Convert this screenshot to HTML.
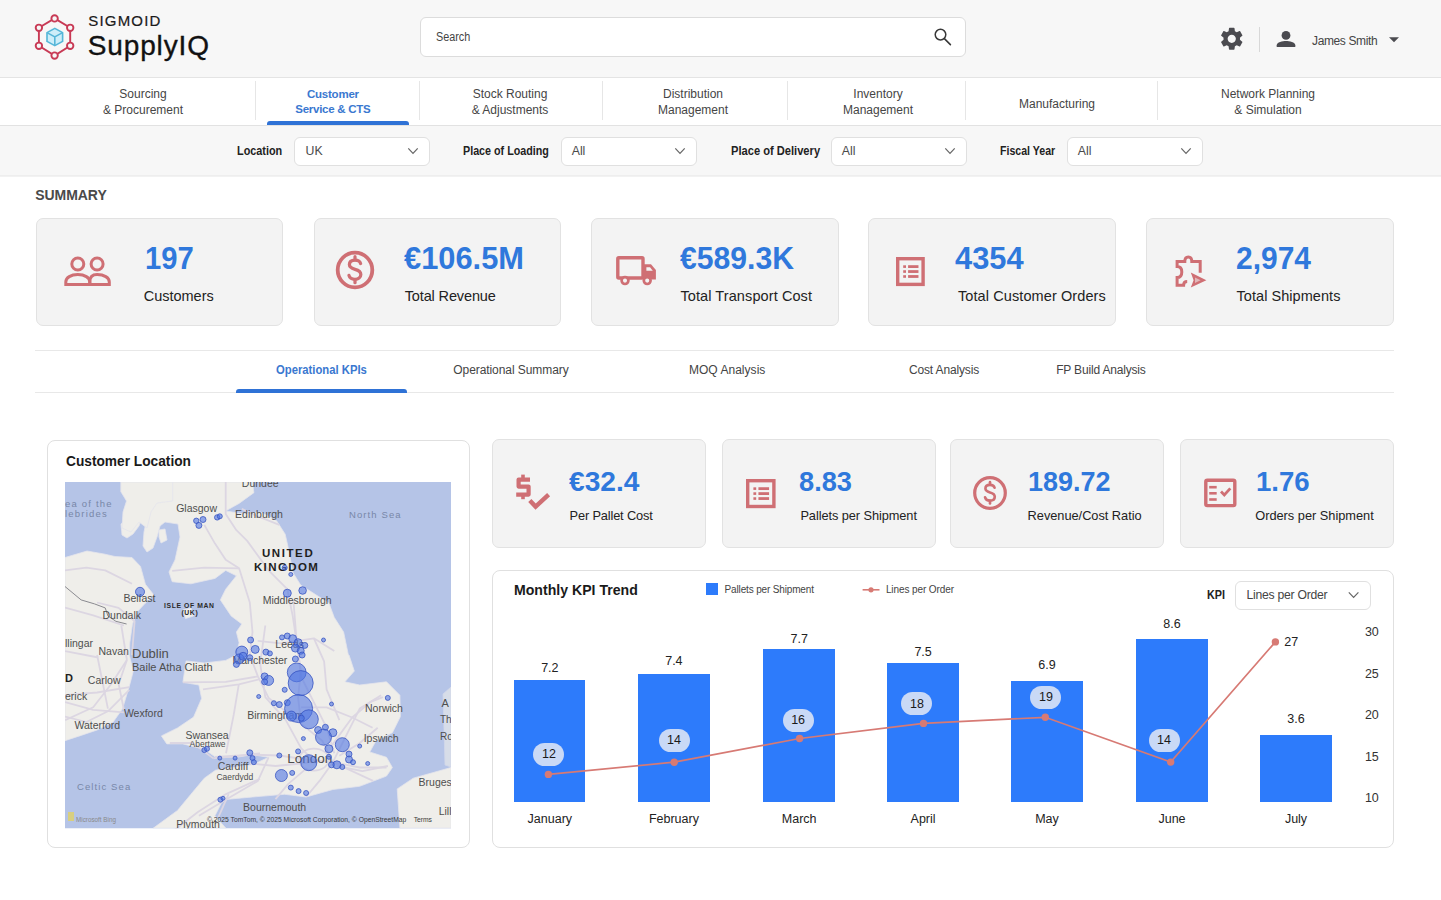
<!DOCTYPE html>
<html><head><meta charset="utf-8"><style>
html,body{margin:0;padding:0;width:1441px;height:900px;overflow:hidden;background:#fff;font-family:"Liberation Sans",sans-serif;}
.t{position:absolute;white-space:nowrap;}
svg{position:absolute;overflow:visible;}
</style></head><body>
<div style="position:absolute;left:0px;top:0px;width:1441px;height:77px;background:#f7f7f7;"></div>
<div style="position:absolute;left:0px;top:77px;width:1441px;height:1px;background:#e4e4e4;"></div>
<div style="position:absolute;left:0px;top:78px;width:1441px;height:47px;background:#ffffff;"></div>
<div style="position:absolute;left:0px;top:125px;width:1441px;height:1px;background:#e2e2e2;"></div>
<div style="position:absolute;left:0px;top:126px;width:1441px;height:49px;background:#f7f7f7;"></div>
<div style="position:absolute;left:0px;top:175px;width:1441px;height:1px;background:#eeeeee;"></div>
<div style="position:absolute;left:0px;top:176px;width:1441px;height:1px;background:#f2f2f2;"></div>
<svg style="left:0;top:0" width="100" height="77" viewBox="0 0 100 77">
<polygon points="54.6,18.4 70.2,27.8 70.2,45.8 54.6,55.6 38.9,45.8 38.9,27.8" fill="none" stroke="#c83a55" stroke-width="1.9"/>
<circle cx="54.6" cy="18.4" r="3.2" fill="#f7f7f7" stroke="#c83a55" stroke-width="1.9"/><circle cx="70.2" cy="27.8" r="3.2" fill="#f7f7f7" stroke="#c83a55" stroke-width="1.9"/><circle cx="70.2" cy="45.8" r="3.2" fill="#f7f7f7" stroke="#c83a55" stroke-width="1.9"/><circle cx="54.6" cy="55.6" r="3.2" fill="#f7f7f7" stroke="#c83a55" stroke-width="1.9"/><circle cx="38.9" cy="45.8" r="3.2" fill="#f7f7f7" stroke="#c83a55" stroke-width="1.9"/><circle cx="38.9" cy="27.8" r="3.2" fill="#f7f7f7" stroke="#c83a55" stroke-width="1.9"/>
<circle cx="54.8" cy="37" r="9" fill="#e3f5fb" opacity="0.7"/>
<g fill="#cdeef9" stroke="#55b6d8" stroke-width="1.6" stroke-linejoin="round">
<path d="M54.8 28.4 L62.6 32.6 L62.6 41.4 L54.8 45.6 L47 41.4 L47 32.6 Z"/>
<path d="M47 32.6 L54.8 36.9 L62.6 32.6 M54.8 36.9 L54.8 45.6" fill="none"/>
</g></svg>
<div class="t" style="top:13.20px;font-size:15px;line-height:15px;color:#1a1a1a;font-weight:normal;letter-spacing:1.185px;left:88.30px;-webkit-text-stroke:0.2px #1a1a1a;">SIGMOID</div>
<div class="t" style="top:31.80px;font-size:28px;line-height:28px;color:#111;font-weight:normal;letter-spacing:0.853px;left:87.80px;-webkit-text-stroke:0.35px #111;">SupplyIQ</div>
<div style="position:absolute;left:420px;top:17px;width:546px;height:40px;box-sizing:border-box;background:#fff;border:1px solid #dcdcdc;border-radius:6px;"></div>
<div class="t" style="top:31.44px;font-size:12px;line-height:12px;color:#444;font-weight:normal;left:435.70px;transform:scaleX(0.9021);transform-origin:0 0;">Search</div>
<svg style="left:930px;top:24px" width="26" height="26" viewBox="930 24 26 26">
<circle cx="940.5" cy="34.6" r="5.3" fill="none" stroke="#383838" stroke-width="1.5"/>
<line x1="944.4" y1="38.6" x2="950.4" y2="44.6" stroke="#383838" stroke-width="1.6" stroke-linecap="round"/>
</svg>
<svg style="left:1217.5px;top:25px" width="27.5" height="27.5" viewBox="0 0 24 24">
<path fill="#4b4b50" d="M19.14 12.94c.04-.3.06-.61.06-.94 0-.32-.02-.64-.07-.94l2.03-1.58c.18-.14.23-.41.12-.61l-1.92-3.32c-.12-.22-.37-.29-.59-.22l-2.39.96c-.5-.38-1.03-.7-1.62-.94l-.36-2.54c-.04-.24-.24-.41-.48-.41h-3.84c-.24 0-.43.17-.47.41l-.36 2.54c-.59.24-1.13.57-1.62.94l-2.39-.96c-.22-.08-.47 0-.59.22L2.74 8.87c-.12.21-.08.47.12.61l2.03 1.58c-.05.3-.09.63-.09.94s.02.64.07.94l-2.03 1.58c-.18.14-.23.41-.12.61l1.92 3.32c.12.22.37.29.59.22l2.39-.96c.5.38 1.03.7 1.62.94l.36 2.54c.05.24.24.41.48.41h3.84c.24 0 .44-.17.47-.41l.36-2.54c.59-.24 1.13-.56 1.62-.94l2.39.96c.22.08.47 0 .59-.22l1.92-3.32c.12-.22.07-.47-.12-.61l-2.01-1.58zM12 15.6c-1.98 0-3.6-1.62-3.6-3.6s1.62-3.6 3.6-3.6 3.6 1.62 3.6 3.6-1.62 3.6-3.6 3.6z"/>
</svg>
<div style="position:absolute;left:1259px;top:27px;width:1px;height:25px;background:#d8d8d8;"></div>
<svg style="left:1274px;top:26px" width="24" height="24" viewBox="0 0 24 24">
<circle cx="12" cy="9.4" r="4.4" fill="#4b4b50"/>
<path fill="#4b4b50" d="M2.7 21 L2.7 19.2 C2.7 16.2 8.6 14.9 12 14.9 C15.4 14.9 21.3 16.2 21.3 19.2 L21.3 21 Z"/>
</svg>
<div class="t" style="top:34.74px;font-size:12px;line-height:12px;color:#444;font-weight:normal;letter-spacing:-0.369px;left:1312.00px;">James Smith</div>
<svg style="left:1388px;top:36px" width="12" height="8" viewBox="1388 36 12 8">
<path d="M1389 37.2 L1399 37.2 L1394 42.2 Z" fill="#4b4b50"/></svg>
<div class="t" style="top:88.14px;font-size:12px;line-height:12px;color:#454545;font-weight:normal;left:-157.00px;width:600px;text-align:center;">Sourcing</div>
<div class="t" style="top:104.04px;font-size:12px;line-height:12px;color:#454545;font-weight:normal;left:-157.00px;width:600px;text-align:center;">& Procurement</div>
<div class="t" style="top:88.57px;font-size:11.5px;line-height:11.5px;color:#3a78d0;font-weight:bold;letter-spacing:-0.210px;left:32.90px;width:600px;text-align:center;">Customer</div>
<div class="t" style="top:104.47px;font-size:11.5px;line-height:11.5px;color:#3a78d0;font-weight:bold;letter-spacing:-0.278px;left:32.86px;width:600px;text-align:center;">Service &amp; CTS</div>
<div class="t" style="top:88.14px;font-size:12px;line-height:12px;color:#454545;font-weight:normal;left:210.00px;width:600px;text-align:center;">Stock Routing</div>
<div class="t" style="top:104.04px;font-size:12px;line-height:12px;color:#454545;font-weight:normal;left:210.00px;width:600px;text-align:center;">&amp; Adjustments</div>
<div class="t" style="top:88.14px;font-size:12px;line-height:12px;color:#454545;font-weight:normal;left:393.00px;width:600px;text-align:center;">Distribution</div>
<div class="t" style="top:104.04px;font-size:12px;line-height:12px;color:#454545;font-weight:normal;left:393.00px;width:600px;text-align:center;">Management</div>
<div class="t" style="top:88.14px;font-size:12px;line-height:12px;color:#454545;font-weight:normal;left:578.00px;width:600px;text-align:center;">Inventory</div>
<div class="t" style="top:104.04px;font-size:12px;line-height:12px;color:#454545;font-weight:normal;left:578.00px;width:600px;text-align:center;">Management</div>
<div class="t" style="top:88.14px;font-size:12px;line-height:12px;color:#454545;font-weight:normal;left:968.00px;width:600px;text-align:center;">Network Planning</div>
<div class="t" style="top:104.04px;font-size:12px;line-height:12px;color:#454545;font-weight:normal;left:968.00px;width:600px;text-align:center;">&amp; Simulation</div>
<div class="t" style="top:98.14px;font-size:12px;line-height:12px;color:#454545;font-weight:normal;left:757.00px;width:600px;text-align:center;">Manufacturing</div>
<div style="position:absolute;left:255px;top:81px;width:1px;height:39px;background:#e6e6e6;"></div>
<div style="position:absolute;left:419px;top:81px;width:1px;height:39px;background:#e6e6e6;"></div>
<div style="position:absolute;left:602px;top:81px;width:1px;height:39px;background:#e6e6e6;"></div>
<div style="position:absolute;left:787px;top:81px;width:1px;height:39px;background:#e6e6e6;"></div>
<div style="position:absolute;left:965px;top:81px;width:1px;height:39px;background:#e6e6e6;"></div>
<div style="position:absolute;left:1157px;top:81px;width:1px;height:39px;background:#e6e6e6;"></div>
<div style="position:absolute;left:267px;top:121px;width:142px;height:4px;background:#2f72d6;border-radius:3px 3px 0 0;"></div>
<div class="t" style="top:144.79px;font-size:12.3px;line-height:12.3px;color:#222;font-weight:bold;left:237.30px;transform:scaleX(0.8820);transform-origin:0 0;">Location</div>
<div style="position:absolute;left:293.5px;top:136.5px;width:136.0px;height:29.0px;box-sizing:border-box;background:#fff;border:1px solid #e0e0e0;border-radius:6px;"></div>
<div class="t" style="top:144.79px;font-size:12.3px;line-height:12.3px;color:#4a4a4a;font-weight:normal;left:305.50px;">UK</div>
<svg style="left:406.5px;top:145.6px" width="12" height="10" viewBox="406.5 145.6 12 10"><path d="M407.8 147.9 L412.5 153.0 L417.2 147.9" fill="none" stroke="#666" stroke-width="1.2"/></svg>
<div class="t" style="top:144.79px;font-size:12.3px;line-height:12.3px;color:#222;font-weight:bold;left:463.40px;transform:scaleX(0.8729);transform-origin:0 0;">Place of Loading</div>
<div style="position:absolute;left:560.5px;top:136.5px;width:136.0px;height:29.0px;box-sizing:border-box;background:#fff;border:1px solid #e0e0e0;border-radius:6px;"></div>
<div class="t" style="top:144.79px;font-size:12.3px;line-height:12.3px;color:#4a4a4a;font-weight:normal;left:571.70px;">All</div>
<svg style="left:673.5px;top:145.6px" width="12" height="10" viewBox="673.5 145.6 12 10"><path d="M674.8 147.9 L679.5 153.0 L684.2 147.9" fill="none" stroke="#666" stroke-width="1.2"/></svg>
<div class="t" style="top:144.79px;font-size:12.3px;line-height:12.3px;color:#222;font-weight:bold;left:730.70px;transform:scaleX(0.9050);transform-origin:0 0;">Place of Delivery</div>
<div style="position:absolute;left:830.5px;top:136.5px;width:136.0px;height:29.0px;box-sizing:border-box;background:#fff;border:1px solid #e0e0e0;border-radius:6px;"></div>
<div class="t" style="top:144.79px;font-size:12.3px;line-height:12.3px;color:#4a4a4a;font-weight:normal;left:841.80px;">All</div>
<svg style="left:943.5px;top:145.6px" width="12" height="10" viewBox="943.5 145.6 12 10"><path d="M944.8 147.9 L949.5 153.0 L954.2 147.9" fill="none" stroke="#666" stroke-width="1.2"/></svg>
<div class="t" style="top:144.79px;font-size:12.3px;line-height:12.3px;color:#222;font-weight:bold;left:1000.30px;transform:scaleX(0.8617);transform-origin:0 0;">Fiscal Year</div>
<div style="position:absolute;left:1066.5px;top:136.5px;width:136.0px;height:29.0px;box-sizing:border-box;background:#fff;border:1px solid #e0e0e0;border-radius:6px;"></div>
<div class="t" style="top:144.79px;font-size:12.3px;line-height:12.3px;color:#4a4a4a;font-weight:normal;left:1077.80px;">All</div>
<svg style="left:1179.5px;top:145.6px" width="12" height="10" viewBox="1179.5 145.6 12 10"><path d="M1180.8 147.9 L1185.5 153.0 L1190.2 147.9" fill="none" stroke="#666" stroke-width="1.2"/></svg>
<div class="t" style="top:188.15px;font-size:14px;line-height:14px;color:#4a4a4a;font-weight:bold;letter-spacing:-0.045px;left:35.20px;">SUMMARY</div>
<div style="position:absolute;left:35.5px;top:217.5px;width:247.0px;height:108.0px;box-sizing:border-box;background:#f3f3f3;border:1px solid #e2e2e2;border-radius:7px;"></div>
<div class="t" style="top:242.74px;font-size:31.5px;line-height:31.5px;color:#2f78dc;font-weight:bold;left:145.00px;transform:scaleX(0.9266);transform-origin:0 0;">197</div>
<div class="t" style="top:289.03px;font-size:14.5px;line-height:14.5px;color:#222;font-weight:normal;letter-spacing:-0.011px;left:143.70px;">Customers</div>
<div style="position:absolute;left:313.5px;top:217.5px;width:247.0px;height:108.0px;box-sizing:border-box;background:#f3f3f3;border:1px solid #e2e2e2;border-radius:7px;"></div>
<div class="t" style="top:242.74px;font-size:31.5px;line-height:31.5px;color:#2f78dc;font-weight:bold;left:404.20px;transform:scaleX(0.9789);transform-origin:0 0;">€106.5M</div>
<div class="t" style="top:289.03px;font-size:14.5px;line-height:14.5px;color:#222;font-weight:normal;letter-spacing:-0.131px;left:404.70px;">Total Revenue</div>
<div style="position:absolute;left:591px;top:217.5px;width:247.5px;height:108.0px;box-sizing:border-box;background:#f3f3f3;border:1px solid #e2e2e2;border-radius:7px;"></div>
<div class="t" style="top:242.74px;font-size:31.5px;line-height:31.5px;color:#2f78dc;font-weight:bold;left:679.90px;transform:scaleX(0.9572);transform-origin:0 0;">€589.3K</div>
<div class="t" style="top:289.03px;font-size:14.5px;line-height:14.5px;color:#222;font-weight:normal;letter-spacing:0.097px;left:680.40px;">Total Transport Cost</div>
<div style="position:absolute;left:868px;top:217.5px;width:247.5px;height:108.0px;box-sizing:border-box;background:#f3f3f3;border:1px solid #e2e2e2;border-radius:7px;"></div>
<div class="t" style="top:242.74px;font-size:31.5px;line-height:31.5px;color:#2f78dc;font-weight:bold;left:954.70px;transform:scaleX(0.9790);transform-origin:0 0;">4354</div>
<div class="t" style="top:289.03px;font-size:14.5px;line-height:14.5px;color:#222;font-weight:normal;letter-spacing:0.102px;left:957.90px;">Total Customer Orders</div>
<div style="position:absolute;left:1146px;top:217.5px;width:247.5px;height:108.0px;box-sizing:border-box;background:#f3f3f3;border:1px solid #e2e2e2;border-radius:7px;"></div>
<div class="t" style="top:242.74px;font-size:31.5px;line-height:31.5px;color:#2f78dc;font-weight:bold;left:1236.00px;transform:scaleX(0.9515);transform-origin:0 0;">2,974</div>
<div class="t" style="top:289.03px;font-size:14.5px;line-height:14.5px;color:#222;font-weight:normal;letter-spacing:0.056px;left:1236.50px;">Total Shipments</div>
<svg style="left:60px;top:250px" width="56" height="42" viewBox="60 250 56 42" fill="none" stroke="#cf6f74" stroke-width="3">
<circle cx="77.8" cy="264" r="6"/>
<circle cx="97.1" cy="264" r="6"/>
<path d="M65.8 284.6 L65.8 282 C65.8 277.5 71 274.6 77.8 274.6 C84.6 274.6 89.8 277.5 89.8 282 L89.8 284.6 Z"/>
<path d="M89.8 284.6 L89.8 282 C89.8 277.5 91.5 274.6 97.1 274.6 C104 274.6 109.3 277.5 109.3 282 L109.3 284.6 Z"/>
</svg>
<svg style="left:325.4px;top:240.39999999999998px" width="60" height="60" viewBox="325.4 240.39999999999998 60 60">
<circle cx="355.4" cy="270.4" r="17.3" fill="none" stroke="#cf6f74" stroke-width="3.8"/>
<g transform="translate(355.4,270.4) scale(1.08)" fill="none" stroke="#cf6f74" stroke-width="3.0" stroke-linecap="round">
<path d="M5.2 -6 C4.6 -8.4 2.6 -9.2 0 -9.2 C-3.2 -9.2 -5.2 -7.6 -5.2 -5 C-5.2 -2.2 -2.6 -1.3 0 -0.6 C2.8 0.1 5.4 1.2 5.4 4.2 C5.4 7 3 8.6 0 8.6 C-3 8.6 -5 7.4 -5.6 5"/>
<line x1="0" y1="-12.3" x2="0" y2="-9.4"/><line x1="0" y1="8.8" x2="0" y2="11.8"/>
</g></svg>
<svg style="left:610px;top:250px" width="52" height="42" viewBox="610 250 52 42">
<rect x="617.8" y="257.8" width="25.2" height="20.2" rx="1" fill="none" stroke="#cf6f74" stroke-width="3.4"/>
<path d="M643 264.2 H651 L655.9 270 V279.6 H643 Z" fill="#cf6f74"/>
<path d="M646.4 267.2 H650 L652.8 270.8 H646.4 Z" fill="#f3f3f3"/>
<circle cx="625" cy="280.6" r="3.4" fill="#f3f3f3" stroke="#cf6f74" stroke-width="2.7"/>
<circle cx="647.2" cy="280.6" r="3.4" fill="#f3f3f3" stroke="#cf6f74" stroke-width="2.7"/>
</svg>
<svg style="left:891.7px;top:253px" width="36.799999999999955" height="37.10000000000002" viewBox="891.7 253 36.799999999999955 37.10000000000002">
<rect x="897.4000000000001" y="258.7" width="25.399999999999956" height="25.700000000000024" fill="none" stroke="#cf6f74" stroke-width="3.4"/><rect x="902.9000000000001" y="265.303" width="2.8" height="2.6" fill="#cf6f74"/><rect x="907.796" y="265.20300000000003" width="10.367999999999983" height="2.8" fill="#cf6f74"/><rect x="902.9000000000001" y="270.25" width="2.8" height="2.6" fill="#cf6f74"/><rect x="907.796" y="270.15000000000003" width="10.367999999999983" height="2.8" fill="#cf6f74"/><rect x="902.9000000000001" y="275.197" width="2.8" height="2.6" fill="#cf6f74"/><rect x="907.796" y="275.09700000000004" width="10.367999999999983" height="2.8" fill="#cf6f74"/></svg>
<svg style="left:1170px;top:250px" width="42" height="42" viewBox="1170 250 42 42">
<path d="M1200.2 272.8 V261.6 H1191.8 C1191.8 258.4 1190.2 257 1188.3 257 C1186.4 257 1184.8 258.4 1184.8 261.6 H1177.1 V266.6 C1180.4 266.6 1181.8 269 1181.8 272 C1181.8 275 1180.4 277.6 1177.1 277.6 V285.2 H1183.6 C1183.6 282.6 1185 281.4 1187.2 281.4" fill="none" stroke="#cf6f74" stroke-width="3" stroke-linejoin="miter"/>
<path d="M1190.8 272.6 L1206.4 280.3 L1190.8 287.6 L1193.6 280.3 Z" fill="#cf6f74"/>
<path d="M1195 277.6 L1200.6 280.3 L1195 283 Z" fill="#f3f3f3" opacity="0.55"/>
</svg>
<div style="position:absolute;left:35px;top:349.5px;width:1359px;height:1.0px;background:#e8e8e8;"></div>
<div style="position:absolute;left:35px;top:391.5px;width:1359px;height:1.0px;background:#e8e8e8;"></div>
<div style="position:absolute;left:235.5px;top:388.5px;width:171.5px;height:4.0px;background:#2f72d6;border-radius:3px 3px 0 0;"></div>
<div class="t" style="top:364.34px;font-size:12px;line-height:12px;color:#3a78d0;font-weight:bold;left:275.60px;transform:scaleX(0.9390);transform-origin:0 0;">Operational KPIs</div>
<div class="t" style="top:364.34px;font-size:12px;line-height:12px;color:#444;font-weight:normal;letter-spacing:-0.075px;left:453.30px;">Operational Summary</div>
<div class="t" style="top:364.34px;font-size:12px;line-height:12px;color:#444;font-weight:normal;letter-spacing:0.040px;left:688.90px;">MOQ Analysis</div>
<div class="t" style="top:364.34px;font-size:12px;line-height:12px;color:#444;font-weight:normal;letter-spacing:-0.156px;left:909.00px;">Cost Analysis</div>
<div class="t" style="top:364.34px;font-size:12px;line-height:12px;color:#444;font-weight:normal;letter-spacing:-0.176px;left:1056.20px;">FP Build Analysis</div>
<div style="position:absolute;left:46.5px;top:439.5px;width:423.0px;height:408.0px;box-sizing:border-box;background:#fff;border:1px solid #e0e0e0;border-radius:8px;"></div>
<div class="t" style="top:453.73px;font-size:14.5px;line-height:14.5px;color:#1a1a1a;font-weight:bold;left:65.50px;transform:scaleX(0.9461);transform-origin:0 0;">Customer Location</div>
<svg style="left:65px;top:482px" width="386" height="346.5" viewBox="0 0 386 346.5">
<defs><clipPath id="mc"><rect x="0" y="0" width="386" height="346.5"/></clipPath></defs>
<g clip-path="url(#mc)">
<rect x="0" y="0" width="386" height="346.5" fill="#b5c4e7"/>
<g fill="#efeeea" stroke="#e4e4ec" stroke-width="0.8">
<polygon points="60.0,0.0 88.4,0.0 187.5,0.0 188.9,10.7 174.1,21.4 160.7,28.9 176.8,31.6 195.6,30.0 211.6,38.8 220.2,52.2 222.9,64.3 228.2,91.1 235.7,103.1 250.5,112.5 263.9,121.1 269.2,135.3 278.6,150.0 283.4,173.1 284.0,173.0 289.3,189.1 279.9,199.8 294.7,203.0 321.5,199.8 334.9,213.2 335.4,234.6 327.4,250.7 310.7,259.3 304.8,270.0 321.5,275.3 327.4,285.5 321.5,294.1 294.7,304.3 267.9,307.5 241.1,315.0 219.7,312.3 187.5,315.0 158.0,317.7 150.0,333.7 160.7,346.1 160.7,346.0 88.4,346.0 88.4,346.1 112.5,328.4 125.9,312.3 139.3,296.2 150.5,288.2 166.6,285.5 187.5,282.8 203.6,275.3 187.5,272.7 171.4,275.3 150.0,274.8 139.3,267.3 117.9,261.9 101.8,261.9 96.4,253.9 112.5,245.9 128.6,235.1 136.6,216.4 133.9,203.0 117.9,200.3 121.1,178.9 139.3,181.0 160.7,178.4 171.4,173.0 171.4,173.1 174.1,160.7 171.4,150.0 176.8,142.0 166.1,133.9 155.4,117.9 160.7,107.2 171.4,93.8 160.7,88.4 150.0,96.4 125.9,101.8 107.2,99.7 104.0,90.0 110.0,78.0 115.0,55.0 113.0,42.0 100.0,40.0 95.0,44.0 92.0,55.0 88.0,66.0 82.0,70.0 78.0,64.0 79.0,50.0 82.0,35.0 84.0,22.0 82.0,12.0 78.0,6.0 62.0,2.0"/><polygon points="0.0,75.5 22.0,69.0 39.0,72.0 50.0,74.5 67.0,75.5 75.5,84.4 80.4,102.3 88.9,113.0 80.4,121.1 72.9,129.1 67.5,142.0 64.8,160.7 64.3,173.1 64.3,173.0 68.3,189.1 64.8,202.5 57.6,226.6 48.2,240.0 32.1,248.0 16.1,253.4 0.0,258.7"/><polygon points="334.9,346.1 332.2,306.9 348.2,296.2 386.0,285.5 386.0,346.1"/>
<polygon points="378,212 386,205 386,285 380,283" opacity="0.6"/><polygon points="56,42 64,36 72,30 78,33 74,44 68,52 62,56 57,53"/><polygon points="55.8,0 107.7,0 107.7,19 92,21 86,30 82,46 74,40 66,50 57,46 58,30 61.5,19 55.8,9.6"/><polygon points="94,48 100,47 102,58 96,61 94,55"/><polygon points="117.9,128.0 125.9,125.9 128.6,133.9 120.5,136.6"/>
</g>
<g fill="none" stroke="#dcd6e2" stroke-width="1.8" stroke-linejoin="round"><path d="M139.3,42.9 L150.0,61.6 L160.7,77.7 L174.1,86.3 L184.8,120.5 L187.5,150.0 L184.8,173.1"/><path d="M160.7,0.0 L160.7,32.1 L171.4,48.2 L182.2,58.9 L203.6,88.4 L222.3,107.2 L227.7,133.9 L233.6,173.1"/><path d="M107.2,88.9 L139.3,85.7 L174.1,86.3"/><path d="M0.0,88.4 L21.4,85.7 L40.2,88.4 L67.0,101.8"/><path d="M32.1,120.5 L53.6,125.9 L69.6,139.3 L67.0,173.1"/><path d="M176.8,26.8 L187.5,32.1 L214.3,42.9"/><path d="M184.8,173.0 L192.9,194.4 L203.6,215.9 L230.4,237.3 L257.2,258.7 L267.9,280.2"/><path d="M233.6,173.0 L235.7,189.1 L233.1,215.9 L235.7,237.3"/><path d="M150.0,274.8 L187.5,272.7 L214.3,273.5 L241.1,277.5 L267.9,280.2"/><path d="M267.9,280.2 L294.7,285.5 L321.5,285.5"/><path d="M267.9,280.2 L281.3,253.4 L294.7,226.6 L316.1,213.2"/><path d="M267.9,280.2 L254.5,298.9 L241.1,315.0"/><path d="M267.9,280.2 L308.1,298.9"/><path d="M203.6,275.3 L192.9,298.9 L160.7,317.7 L133.9,333.7"/><path d="M117.9,200.3 L160.7,199.8 L192.9,194.4"/><path d="M0.0,213.2 L32.1,210.5 L64.3,205.1"/><path d="M0.0,234.6 L21.4,240.0 L42.9,229.3 L64.3,207.8"/><path d="M32.1,173.0 L37.5,199.8 L42.9,226.6"/><path d="M228.4,118.0 L231.0,151.2 L236.1,194.6 L251.4,225.3 L261.6,245.7 L269.3,271.3"/><path d="M200.3,143.5 L195.2,181.9 L200.3,215.1 L220.8,238.1 L236.1,266.1 L251.4,281.5"/><path d="M185.0,281.5 L210.5,284.0 L236.1,281.5 L251.4,278.9"/><path d="M266.7,263.6 L287.2,235.5 L305.1,220.2 L317.8,215.1"/><path d="M274.4,273.8 L294.8,261.0 L312.7,245.7"/><path d="M271.8,284.0 L297.4,289.1 L322.9,284.0"/><path d="M241.2,286.6 L223.3,301.9 L210.5,317.2"/><path d="M236.1,225.3 L261.6,225.3 L287.2,235.5 L307.6,245.7"/><path d="M248.9,156.3 L259.1,179.3 L261.6,207.4 L274.4,238.1"/><path d="M192.7,158.9 L215.7,161.4 L248.9,156.3 L269.3,169.1"/><path d="M0.1,125.7 L28.2,133.3 L58.9,143.5"/><path d="M56.3,143.5 L61.9,178.0"/><path d="M61.9,178.0 L46.1,202.3 L28.2,225.3 L0.1,238.1"/><path d="M61.9,178.0 L53.7,202.3 L58.9,227.8"/><path d="M33.3,175.5 L0.1,169.1"/><path d="M0.1,220.2 L28.2,227.8 L58.9,230.4"/><path d="M138.0,207.4 L173.8,202.3 L195.0,197.2"/><path d="M148.3,276.4 L173.8,273.8 L195.0,271.3"/><path d="M173.8,202.3 L168.7,232.9 L161.0,271.3"/><path d="M195.0,296.8 L161.0,312.1 L132.9,330.0 L109.9,347.9"/><path d="M163.6,312.1 L153.4,335.1"/><path d="M104.8,261.0 L127.8,261.0 L148.3,276.4"/><ellipse cx="248.9" cy="277.6" rx="15" ry="11"/></g>
<path d="M0.0,104.5 L16.1,117.9 L29.5,121.9 L40.2,125.9 L42.9,133.9 L50.9,139.3 L61.6,142.0" fill="none" stroke="#8a8a90" stroke-width="1"/>
<g font-family="Liberation Sans, sans-serif"><text x="176.8" y="5.4" font-size="10.5" fill="#4e4e4e" font-weight="normal" letter-spacing="0" >Dundee</text><text x="0.0" y="25.4" font-size="9.5" fill="#7887a8" font-weight="normal" letter-spacing="1.2" >ea of the</text><text x="0.0" y="35.4" font-size="9.5" fill="#7887a8" font-weight="normal" letter-spacing="1.2" >lebrides</text><text x="111.2" y="30.3" font-size="10.5" fill="#4e4e4e" font-weight="normal" letter-spacing="0" >Glasgow</text><text x="170.1" y="35.6" font-size="10.5" fill="#4e4e4e" font-weight="normal" letter-spacing="0" >Edinburgh</text><text x="284.0" y="35.6" font-size="9.5" fill="#7887a8" font-weight="normal" letter-spacing="1.1" >North Sea</text><text x="196.9" y="75.3" font-size="11.5" fill="#1e1e1e" font-weight="bold" letter-spacing="1.6" >UNITED</text><text x="188.9" y="88.7" font-size="11.5" fill="#1e1e1e" font-weight="bold" letter-spacing="1.4" >KINGDOM</text><text x="58.4" y="119.7" font-size="10.5" fill="#4e4e4e" font-weight="normal" letter-spacing="0" >Belfast</text><text x="99.1" y="126.2" font-size="6.8" fill="#2a2a2a" font-weight="bold" letter-spacing="0.6" >ISLE OF MAN</text><text x="116.5" y="133.1" font-size="6.8" fill="#2a2a2a" font-weight="bold" letter-spacing="0.6" >(UK)</text><text x="197.7" y="122.4" font-size="10.5" fill="#4e4e4e" font-weight="normal" letter-spacing="0" >Middlesbrough</text><text x="37.5" y="137.2" font-size="10.5" fill="#4e4e4e" font-weight="normal" letter-spacing="0" >Dundalk</text><text x="0.0" y="164.7" font-size="10.5" fill="#4e4e4e" font-weight="normal" letter-spacing="0" >llingar</text><text x="33.5" y="172.8" font-size="10.5" fill="#4e4e4e" font-weight="normal" letter-spacing="0" >Navan</text><text x="210.3" y="166.1" font-size="10.5" fill="#4e4e4e" font-weight="normal" letter-spacing="0" >Leeds</text><text x="167.5" y="182.4" font-size="10.5" fill="#4e4e4e" font-weight="normal" letter-spacing="0" >Manchester</text><text x="67.0" y="176.2" font-size="13" fill="#4e4e4e" font-weight="normal" letter-spacing="0" >Dublin</text><text x="67.0" y="188.5" font-size="11" fill="#4e4e4e" font-weight="normal" letter-spacing="0" >Baile Atha Cliath</text><text x="0.0" y="200.3" font-size="11" fill="#1e1e1e" font-weight="bold" letter-spacing="0" >D</text><text x="22.8" y="201.7" font-size="10.5" fill="#4e4e4e" font-weight="normal" letter-spacing="0" >Carlow</text><text x="0.0" y="217.7" font-size="10.5" fill="#4e4e4e" font-weight="normal" letter-spacing="0" >erick</text><text x="58.9" y="235.1" font-size="10.5" fill="#4e4e4e" font-weight="normal" letter-spacing="0" >Wexford</text><text x="9.4" y="247.2" font-size="10.5" fill="#4e4e4e" font-weight="normal" letter-spacing="0" >Waterford</text><text x="120.5" y="256.6" font-size="10.5" fill="#4e4e4e" font-weight="normal" letter-spacing="0" >Swansea</text><text x="124.6" y="265.4" font-size="8.5" fill="#4e4e4e" font-weight="normal" letter-spacing="0" >Abertawe</text><text x="182.2" y="237.3" font-size="10.5" fill="#4e4e4e" font-weight="normal" letter-spacing="0" >Birmingham</text><text x="300.0" y="229.8" font-size="10.5" fill="#4e4e4e" font-weight="normal" letter-spacing="0" >Norwich</text><text x="298.7" y="260.1" font-size="10.5" fill="#4e4e4e" font-weight="normal" letter-spacing="0" >Ipswich</text><text x="222.3" y="280.7" font-size="13.5" fill="#4e4e4e" font-weight="normal" letter-spacing="0" >London</text><text x="152.7" y="288.2" font-size="10.5" fill="#4e4e4e" font-weight="normal" letter-spacing="0" >Cardiff</text><text x="151.4" y="297.8" font-size="8.5" fill="#4e4e4e" font-weight="normal" letter-spacing="0" >Caerdydd</text><text x="12.0" y="307.5" font-size="9.5" fill="#7887a8" font-weight="normal" letter-spacing="1.1" >Celtic Sea</text><text x="353.6" y="303.5" font-size="10.5" fill="#4e4e4e" font-weight="normal" letter-spacing="0" >Bruges</text><text x="178.1" y="328.9" font-size="10.5" fill="#4e4e4e" font-weight="normal" letter-spacing="0" >Bournemouth</text><text x="111.2" y="345.8" font-size="10.5" fill="#4e4e4e" font-weight="normal" letter-spacing="0" >Plymouth</text><text x="373.7" y="333.0" font-size="10.5" fill="#4e4e4e" font-weight="normal" letter-spacing="0" >Lill</text><text x="376.4" y="224.7" font-size="11" fill="#4e4e4e" font-weight="normal" letter-spacing="0" >A</text><text x="375.0" y="241.3" font-size="10" fill="#4e4e4e" font-weight="normal" letter-spacing="0" >Th</text><text x="375.0" y="258.2" font-size="10" fill="#4e4e4e" font-weight="normal" letter-spacing="0" >Ro</text><text x="142.0" y="339.8" font-size="7" fill="#3a3a3a" font-weight="normal" letter-spacing="0" textLength="225" lengthAdjust="spacingAndGlyphs">© 2025 TomTom, © 2025 Microsoft Corporation, © OpenStreetMap &#160;&#160; Terms</text></g>
<g fill="rgba(78,116,226,0.6)" stroke="rgba(52,82,192,0.85)" stroke-width="0.9"><circle cx="131.3" cy="38.8" r="2.7"/><circle cx="138.0" cy="37.5" r="3"/><circle cx="133.9" cy="43.4" r="3"/><circle cx="152.2" cy="35.4" r="2.7"/><circle cx="154.8" cy="34.3" r="2.5"/><circle cx="225.8" cy="92.4" r="2"/><circle cx="219.7" cy="85.7" r="2.5"/><circle cx="222.3" cy="111.2" r="4"/><circle cx="237.6" cy="108.5" r="3.8"/><circle cx="75.0" cy="109.8" r="4.5"/><circle cx="217.0" cy="155.4" r="2.5"/><circle cx="222.3" cy="154.0" r="3"/><circle cx="227.7" cy="156.7" r="4"/><circle cx="233.1" cy="160.7" r="4"/><circle cx="230.4" cy="166.1" r="4"/><circle cx="235.7" cy="168.8" r="3.5"/><circle cx="239.8" cy="163.4" r="3"/><circle cx="258.5" cy="158.0" r="2"/><circle cx="185.6" cy="158.0" r="3"/><circle cx="190.2" cy="167.4" r="4"/><circle cx="176.8" cy="170.1" r="6"/><circle cx="200.9" cy="170.1" r="3"/><circle cx="204.9" cy="171.4" r="2.5"/><circle cx="174.1" cy="177.0" r="5"/><circle cx="171.4" cy="182.4" r="3"/><circle cx="178.1" cy="174.3" r="4"/><circle cx="184.8" cy="175.7" r="3"/><circle cx="230.4" cy="177.0" r="3"/><circle cx="237.1" cy="173.0" r="3"/><circle cx="199.6" cy="194.4" r="3.5"/><circle cx="203.6" cy="198.4" r="5"/><circle cx="199.6" cy="199.8" r="3"/><circle cx="231.7" cy="190.4" r="9.4"/><circle cx="235.7" cy="201.1" r="12.5"/><circle cx="219.7" cy="207.8" r="2.5"/><circle cx="193.7" cy="214.5" r="2"/><circle cx="322.8" cy="215.9" r="2.5"/><circle cx="266.5" cy="222.0" r="2"/><circle cx="208.9" cy="221.2" r="2.5"/><circle cx="214.3" cy="222.6" r="3"/><circle cx="222.3" cy="220.7" r="3"/><circle cx="233.6" cy="226.6" r="14"/><circle cx="243.8" cy="237.3" r="9.5"/><circle cx="226.4" cy="234.1" r="5"/><circle cx="236.3" cy="236.2" r="3"/><circle cx="253.1" cy="248.0" r="3.5"/><circle cx="260.4" cy="245.3" r="3"/><circle cx="267.9" cy="250.7" r="4"/><circle cx="258.5" cy="255.2" r="8"/><circle cx="263.9" cy="266.8" r="4"/><circle cx="277.3" cy="262.7" r="7"/><circle cx="284.0" cy="272.1" r="3"/><circle cx="284.0" cy="277.5" r="3.5"/><circle cx="288.0" cy="280.2" r="2.5"/><circle cx="294.7" cy="264.1" r="2"/><circle cx="302.7" cy="281.5" r="2"/><circle cx="238.4" cy="256.6" r="2"/><circle cx="233.1" cy="269.4" r="2.5"/><circle cx="243.8" cy="280.7" r="8"/><circle cx="263.9" cy="274.8" r="2.5"/><circle cx="266.5" cy="282.8" r="3"/><circle cx="271.9" cy="282.8" r="4"/><circle cx="277.3" cy="285.0" r="2.5"/><circle cx="184.8" cy="270.8" r="3"/><circle cx="187.5" cy="276.1" r="2.5"/><circle cx="188.9" cy="280.2" r="2.5"/><circle cx="170.1" cy="276.1" r="2"/><circle cx="154.8" cy="276.1" r="2"/><circle cx="139.3" cy="268.1" r="2.5"/><circle cx="142.0" cy="266.8" r="2.5"/><circle cx="214.3" cy="273.5" r="2.5"/><circle cx="216.4" cy="293.5" r="6"/><circle cx="227.2" cy="290.9" r="2.5"/><circle cx="225.8" cy="305.6" r="2.5"/><circle cx="233.6" cy="309.1" r="2.5"/><circle cx="241.1" cy="311.0" r="2.5"/><circle cx="155.4" cy="317.7" r="2.5"/><circle cx="158.0" cy="316.3" r="2"/></g>
<rect x="3" y="330" width="6" height="9" fill="#d8cf80"/>
<text x="11" y="339.5" font-size="6.5" fill="#8a8a8a" font-family="Liberation Sans, sans-serif" textLength="40" lengthAdjust="spacingAndGlyphs">Microsoft Bing</text>
</g></svg>
<div style="position:absolute;left:492px;top:439px;width:214px;height:108.5px;box-sizing:border-box;background:#f3f3f3;border:1px solid #e2e2e2;border-radius:7px;"></div>
<div class="t" style="top:467.07px;font-size:28.5px;line-height:28.5px;color:#2f78dc;font-weight:bold;left:568.80px;transform:scaleX(0.9885);transform-origin:0 0;">€32.4</div>
<div class="t" style="top:509.76px;font-size:12.8px;line-height:12.8px;color:#222;font-weight:normal;letter-spacing:-0.158px;left:569.60px;">Per Pallet Cost</div>
<div style="position:absolute;left:722px;top:439px;width:214px;height:108.5px;box-sizing:border-box;background:#f3f3f3;border:1px solid #e2e2e2;border-radius:7px;"></div>
<div class="t" style="top:467.07px;font-size:28.5px;line-height:28.5px;color:#2f78dc;font-weight:bold;left:799.40px;transform:scaleX(0.9555);transform-origin:0 0;">8.83</div>
<div class="t" style="top:509.76px;font-size:12.8px;line-height:12.8px;color:#222;font-weight:normal;letter-spacing:-0.080px;left:800.40px;">Pallets per Shipment</div>
<div style="position:absolute;left:950px;top:439px;width:214px;height:108.5px;box-sizing:border-box;background:#f3f3f3;border:1px solid #e2e2e2;border-radius:7px;"></div>
<div class="t" style="top:467.07px;font-size:28.5px;line-height:28.5px;color:#2f78dc;font-weight:bold;left:1027.90px;transform:scaleX(0.9464);transform-origin:0 0;">189.72</div>
<div class="t" style="top:509.76px;font-size:12.8px;line-height:12.8px;color:#222;font-weight:normal;letter-spacing:-0.031px;left:1027.60px;">Revenue/Cost Ratio</div>
<div style="position:absolute;left:1180px;top:439px;width:214px;height:108.5px;box-sizing:border-box;background:#f3f3f3;border:1px solid #e2e2e2;border-radius:7px;"></div>
<div class="t" style="top:467.07px;font-size:28.5px;line-height:28.5px;color:#2f78dc;font-weight:bold;left:1255.80px;transform:scaleX(0.9681);transform-origin:0 0;">1.76</div>
<div class="t" style="top:509.76px;font-size:12.8px;line-height:12.8px;color:#222;font-weight:normal;letter-spacing:-0.011px;left:1255.20px;">Orders per Shipment</div>
<svg style="left:510px;top:470px" width="45" height="45" viewBox="510 470 45 45">
<path d="M530 479.6 H518.6 V486.6 H528.6 V494.6 H516.2" fill="none" stroke="#cf6f74" stroke-width="4.2" stroke-linejoin="round"/>
<line x1="523" y1="474.6" x2="523" y2="478" stroke="#cf6f74" stroke-width="3.6"/>
<line x1="523" y1="496" x2="523" y2="499.2" stroke="#cf6f74" stroke-width="3.6"/>
<path d="M529.8 500.4 L535.6 506.6 L548.6 494.6" fill="none" stroke="#cf6f74" stroke-width="4.4"/>
</svg>
<svg style="left:742.1px;top:475.1px" width="37.60000000000002" height="37.19999999999999" viewBox="742.1 475.1 37.60000000000002 37.19999999999999">
<rect x="747.8000000000001" y="480.8" width="26.200000000000024" height="25.79999999999999" fill="none" stroke="#cf6f74" stroke-width="3.4"/><rect x="753.5" y="487.43600000000004" width="2.8" height="2.6" fill="#cf6f74"/><rect x="758.532" y="487.33600000000007" width="10.656000000000008" height="2.8" fill="#cf6f74"/><rect x="753.5" y="492.40000000000003" width="2.8" height="2.6" fill="#cf6f74"/><rect x="758.532" y="492.30000000000007" width="10.656000000000008" height="2.8" fill="#cf6f74"/><rect x="753.5" y="497.364" width="2.8" height="2.6" fill="#cf6f74"/><rect x="758.532" y="497.264" width="10.656000000000008" height="2.8" fill="#cf6f74"/></svg>
<svg style="left:959.5px;top:463.1px" width="60" height="60" viewBox="959.5 463.1 60 60">
<circle cx="989.5" cy="493.1" r="15.3" fill="none" stroke="#cf6f74" stroke-width="3.2"/>
<g transform="translate(989.5,493.1) scale(0.88)" fill="none" stroke="#cf6f74" stroke-width="3.0" stroke-linecap="round">
<path d="M5.2 -6 C4.6 -8.4 2.6 -9.2 0 -9.2 C-3.2 -9.2 -5.2 -7.6 -5.2 -5 C-5.2 -2.2 -2.6 -1.3 0 -0.6 C2.8 0.1 5.4 1.2 5.4 4.2 C5.4 7 3 8.6 0 8.6 C-3 8.6 -5 7.4 -5.6 5"/>
<line x1="0" y1="-12.3" x2="0" y2="-9.4"/><line x1="0" y1="8.8" x2="0" y2="11.8"/>
</g></svg>
<svg style="left:1200px;top:474px" width="42" height="38" viewBox="1200 474 42 38">
<rect x="1205.8" y="480.3" width="29" height="25.3" rx="1.5" fill="none" stroke="#cf6f74" stroke-width="3.4"/>
<rect x="1209.2" y="485.9" width="7.5" height="2.6" fill="#cf6f74"/>
<rect x="1209.2" y="492" width="7.5" height="2.6" fill="#cf6f74"/>
<rect x="1209.2" y="498.2" width="7.5" height="2.6" fill="#cf6f74"/>
<path d="M1221 491.6 L1224.3 495 L1230.3 488.4" fill="none" stroke="#cf6f74" stroke-width="2.8"/>
</svg>
<div style="position:absolute;left:492px;top:569.5px;width:901.5px;height:278.0px;box-sizing:border-box;background:#fff;border:1px solid #e0e0e0;border-radius:8px;"></div>
<div class="t" style="top:582.93px;font-size:14.5px;line-height:14.5px;color:#1a1a1a;font-weight:bold;left:513.60px;transform:scaleX(0.9727);transform-origin:0 0;">Monthly KPI Trend</div>
<div style="position:absolute;left:706px;top:583.2px;width:12px;height:11.5px;background:#2d7bfb;"></div>
<div class="t" style="top:584.83px;font-size:10px;line-height:10px;color:#444;font-weight:normal;letter-spacing:-0.154px;left:724.60px;">Pallets per Shipment</div>
<svg style="left:860px;top:584px" width="22" height="12" viewBox="860 584 22 12">
<line x1="862.6" y1="589.8" x2="879.5" y2="589.8" stroke="#d77a74" stroke-width="1.6"/>
<circle cx="871" cy="589.8" r="2.6" fill="#d77a74"/></svg>
<div class="t" style="top:584.83px;font-size:10px;line-height:10px;color:#444;font-weight:normal;letter-spacing:-0.099px;left:885.90px;">Lines per Order</div>
<div class="t" style="top:588.59px;font-size:12.3px;line-height:12.3px;color:#222;font-weight:bold;left:1206.80px;transform:scaleX(0.8779);transform-origin:0 0;">KPI</div>
<div style="position:absolute;left:1234.5px;top:580.5px;width:136.5px;height:29.0px;box-sizing:border-box;background:#fff;border:1px solid #e0e0e0;border-radius:6px;"></div>
<div class="t" style="top:588.67px;font-size:12.2px;line-height:12.2px;color:#444;font-weight:normal;letter-spacing:-0.251px;left:1246.50px;">Lines per Order</div>
<svg style="left:1347px;top:590px" width="14" height="10" viewBox="1347 590 14 10"><path d="M1348.8 592.3 L1353.6 597.3 L1358.4 592.3" fill="none" stroke="#666" stroke-width="1.2"/></svg>
<div style="position:absolute;left:514.2px;top:679.9px;width:71.29999999999995px;height:121.80000000000007px;background:#2d7bfb;"></div>
<div class="t" style="top:661.92px;font-size:12.5px;line-height:12.5px;color:#222;font-weight:normal;left:249.85px;width:600px;text-align:center;">7.2</div>
<div class="t" style="top:812.72px;font-size:12.5px;line-height:12.5px;color:#222;font-weight:normal;left:249.85px;width:600px;text-align:center;">January</div>
<div style="position:absolute;left:638.1px;top:673.8px;width:71.60000000000002px;height:127.90000000000009px;background:#2d7bfb;"></div>
<div class="t" style="top:655.22px;font-size:12.5px;line-height:12.5px;color:#222;font-weight:normal;left:373.90px;width:600px;text-align:center;">7.4</div>
<div class="t" style="top:812.72px;font-size:12.5px;line-height:12.5px;color:#222;font-weight:normal;left:373.90px;width:600px;text-align:center;">February</div>
<div style="position:absolute;left:763.4px;top:648.8px;width:71.60000000000002px;height:152.9000000000001px;background:#2d7bfb;"></div>
<div class="t" style="top:632.62px;font-size:12.5px;line-height:12.5px;color:#222;font-weight:normal;left:499.20px;width:600px;text-align:center;">7.7</div>
<div class="t" style="top:812.72px;font-size:12.5px;line-height:12.5px;color:#222;font-weight:normal;left:499.20px;width:600px;text-align:center;">March</div>
<div style="position:absolute;left:887.3px;top:663.3px;width:71.60000000000002px;height:138.4000000000001px;background:#2d7bfb;"></div>
<div class="t" style="top:645.92px;font-size:12.5px;line-height:12.5px;color:#222;font-weight:normal;left:623.10px;width:600px;text-align:center;">7.5</div>
<div class="t" style="top:812.72px;font-size:12.5px;line-height:12.5px;color:#222;font-weight:normal;left:623.10px;width:600px;text-align:center;">April</div>
<div style="position:absolute;left:1011.2px;top:680.8px;width:71.5px;height:120.90000000000009px;background:#2d7bfb;"></div>
<div class="t" style="top:659.22px;font-size:12.5px;line-height:12.5px;color:#222;font-weight:normal;left:746.95px;width:600px;text-align:center;">6.9</div>
<div class="t" style="top:812.72px;font-size:12.5px;line-height:12.5px;color:#222;font-weight:normal;left:746.95px;width:600px;text-align:center;">May</div>
<div style="position:absolute;left:1136px;top:639.2px;width:72px;height:162.5px;background:#2d7bfb;"></div>
<div class="t" style="top:617.92px;font-size:12.5px;line-height:12.5px;color:#222;font-weight:normal;left:872.00px;width:600px;text-align:center;">8.6</div>
<div class="t" style="top:812.72px;font-size:12.5px;line-height:12.5px;color:#222;font-weight:normal;left:872.00px;width:600px;text-align:center;">June</div>
<div style="position:absolute;left:1260px;top:735.2px;width:72px;height:66.5px;background:#2d7bfb;"></div>
<div class="t" style="top:713.22px;font-size:12.5px;line-height:12.5px;color:#222;font-weight:normal;left:996.00px;width:600px;text-align:center;">3.6</div>
<div class="t" style="top:812.72px;font-size:12.5px;line-height:12.5px;color:#222;font-weight:normal;left:996.00px;width:600px;text-align:center;">July</div>
<svg style="left:0;top:0" width="1441" height="900" viewBox="0 0 1441 900">
<path d="M548.4,774.4 L674.2,762.2 L799.6,738.5 L923.5,723.4 L1045.3,717.3 L1170.7,762.1 L1275.4,641.9" fill="none" stroke="#d77a74" stroke-width="1.7"/><circle cx="548.4" cy="774.4" r="3.7" fill="#d77a74"/><circle cx="674.2" cy="762.2" r="3.7" fill="#d77a74"/><circle cx="799.6" cy="738.5" r="3.7" fill="#d77a74"/><circle cx="923.5" cy="723.4" r="3.7" fill="#d77a74"/><circle cx="1045.3" cy="717.3" r="3.7" fill="#d77a74"/><circle cx="1170.7" cy="762.1" r="3.7" fill="#d77a74"/><circle cx="1275.4" cy="641.9" r="3.7" fill="#d77a74"/></svg>
<div style="position:absolute;left:533.4px;top:742.9px;width:31.0px;height:23.0px;background:#c9d9f6;border-radius:11.5px;"></div>
<div class="t" style="top:748.32px;font-size:12.5px;line-height:12.5px;color:#1a1a1a;font-weight:normal;left:248.90px;width:600px;text-align:center;">12</div>
<div style="position:absolute;left:658.5px;top:728.7px;width:31.0px;height:23.0px;background:#c9d9f6;border-radius:11.5px;"></div>
<div class="t" style="top:734.12px;font-size:12.5px;line-height:12.5px;color:#1a1a1a;font-weight:normal;left:374.00px;width:600px;text-align:center;">14</div>
<div style="position:absolute;left:782.6px;top:708.7px;width:31.0px;height:23.0px;background:#c9d9f6;border-radius:11.5px;"></div>
<div class="t" style="top:714.12px;font-size:12.5px;line-height:12.5px;color:#1a1a1a;font-weight:normal;left:498.10px;width:600px;text-align:center;">16</div>
<div style="position:absolute;left:901.4px;top:692.1px;width:31.0px;height:23.0px;background:#c9d9f6;border-radius:11.5px;"></div>
<div class="t" style="top:697.52px;font-size:12.5px;line-height:12.5px;color:#1a1a1a;font-weight:normal;left:616.90px;width:600px;text-align:center;">18</div>
<div style="position:absolute;left:1030.4px;top:685.8px;width:31.0px;height:23.0px;background:#c9d9f6;border-radius:11.5px;"></div>
<div class="t" style="top:691.22px;font-size:12.5px;line-height:12.5px;color:#1a1a1a;font-weight:normal;left:745.90px;width:600px;text-align:center;">19</div>
<div style="position:absolute;left:1148.5px;top:729.0px;width:31.0px;height:23.0px;background:#c9d9f6;border-radius:11.5px;"></div>
<div class="t" style="top:734.42px;font-size:12.5px;line-height:12.5px;color:#1a1a1a;font-weight:normal;left:864.00px;width:600px;text-align:center;">14</div>
<div class="t" style="top:636.02px;font-size:12.5px;line-height:12.5px;color:#222;font-weight:normal;left:1284.30px;">27</div>
<div class="t" style="top:625.62px;font-size:12.5px;line-height:12.5px;color:#333;font-weight:normal;left:778.80px;width:600px;text-align:right;">30</div>
<div class="t" style="top:667.82px;font-size:12.5px;line-height:12.5px;color:#333;font-weight:normal;left:778.80px;width:600px;text-align:right;">25</div>
<div class="t" style="top:708.62px;font-size:12.5px;line-height:12.5px;color:#333;font-weight:normal;left:778.80px;width:600px;text-align:right;">20</div>
<div class="t" style="top:750.82px;font-size:12.5px;line-height:12.5px;color:#333;font-weight:normal;left:778.80px;width:600px;text-align:right;">15</div>
<div class="t" style="top:791.62px;font-size:12.5px;line-height:12.5px;color:#333;font-weight:normal;left:778.80px;width:600px;text-align:right;">10</div>
</body></html>
